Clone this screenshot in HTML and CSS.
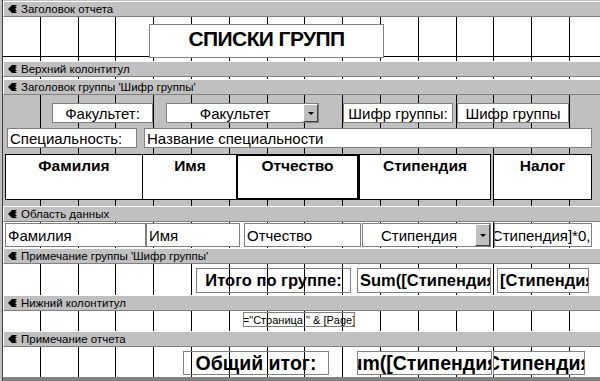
FILE: index.html
```html
<!DOCTYPE html>
<html lang="ru">
<head>
<meta charset="utf-8">
<title>Отчет — конструктор</title>
<link rel="stylesheet" href="styles.css">
</head>
<body>
<div class="design">
  <div class="bar"><svg class="ico" viewBox="0 0 9 8" width="9" height="8"><path d="M0 4 L4 0 H9 L7 2 H9 L7 4 L9 6 H7 L9 8 H4 Z"/></svg><span>Заголовок отчета</span></div>
  <div class="sec grid s-rh">
    <div class="ctl title">СПИСКИ ГРУПП</div>
  </div>

  <div class="bar"><svg class="ico" viewBox="0 0 9 8" width="9" height="8"><path d="M0 4 L4 0 H9 L7 2 H9 L7 4 L9 6 H7 L9 8 H4 Z"/></svg><span>Верхний колонтитул</span></div>
  <div class="sec grid s-ph"></div>

  <div class="bar"><svg class="ico" viewBox="0 0 9 8" width="9" height="8"><path d="M0 4 L4 0 H9 L7 2 H9 L7 4 L9 6 H7 L9 8 H4 Z"/></svg><span>Заголовок группы 'Шифр группы'</span></div>
  <div class="sec grid gray s-gh">
    <div class="ctl lbl c fac-l">Факультет:</div>
    <div class="ctl lbl combo fac-c"><span class="ctext">Факультет</span><span class="btn"><i></i></span></div>
    <div class="ctl lbl c shf-l">Шифр группы:</div>
    <div class="ctl lbl c shf-t">Шифр группы</div>
    <div class="ctl lbl spec-l">Специальность:</div>
    <div class="ctl lbl spec-t">Название специальности</div>
    <div class="ctl th th1">Фамилия</div>
    <div class="ctl th th2">Имя</div>
    <div class="ctl th th3">Отчество</div>
    <div class="ctl th th4">Стипендия</div>
    <div class="ctl th th5">Налог</div>
  </div>

  <div class="bar"><svg class="ico" viewBox="0 0 9 8" width="9" height="8"><path d="M0 4 L4 0 H9 L7 2 H9 L7 4 L9 6 H7 L9 8 H4 Z"/></svg><span>Область данных</span></div>
  <div class="sec grid s-d">
    <div class="ctl lbl dt d1">Фамилия</div>
    <div class="ctl lbl dt d2">Имя</div>
    <div class="ctl lbl dt d3">Отчество</div>
    <div class="ctl lbl combo dt d4"><span class="ctext">Стипендия</span><span class="btn"><i></i></span></div>
    <div class="ctl lbl dt c d5">=[Стипендия]*0,13</div>
  </div>

  <div class="bar"><svg class="ico" viewBox="0 0 9 8" width="9" height="8"><path d="M0 4 L4 0 H9 L7 2 H9 L7 4 L9 6 H7 L9 8 H4 Z"/></svg><span>Примечание группы 'Шифр группы'</span></div>
  <div class="sec grid s-gf">
    <div class="ctl tr b16 c gf1">Итого по группе:</div>
    <div class="ctl b16 gf2">Sum([Стипендия])</div>
    <div class="ctl b16 gf3">[Стипендия]*0,13</div>
  </div>

  <div class="bar"><svg class="ico" viewBox="0 0 9 8" width="9" height="8"><path d="M0 4 L4 0 H9 L7 2 H9 L7 4 L9 6 H7 L9 8 H4 Z"/></svg><span>Нижний колонтитул</span></div>
  <div class="sec grid s-pf">
    <div class="ctl tr c pg">="Страница " &amp; [Page]</div>
  </div>

  <div class="bar"><svg class="ico" viewBox="0 0 9 8" width="9" height="8"><path d="M0 4 L4 0 H9 L7 2 H9 L7 4 L9 6 H7 L9 8 H4 Z"/></svg><span>Примечание отчета</span></div>
  <div class="sec grid s-rf">
    <div class="ctl tr b18 c rf1">Общий итог:</div>
    <div class="ctl b18 c rf2">Sum([Стипендия])</div>
    <div class="ctl b18 c rf3">[Стипендия]</div>
  </div>
  <div class="bottom"></div>
</div>
</body>
</html>
```

FILE: styles.css
```css
html, body {
  margin: 0;
  padding: 0;
}
body {
  width: 600px;
  height: 381px;
  overflow: hidden;
  background: #c0c0c0;
  font-family: "Liberation Sans", Arial, sans-serif;
  color: #000;
}
.design {
  margin-left: 2px;
  padding-top: 1px;
  border-left: 1px solid #404040;
  display: flex;
  flex-direction: column;
}
.bar {
  box-sizing: border-box;
  height: 16px;
  background: #c0c0c0;
  border-top: 1px solid #fff;
  border-left: 1px solid #fff;
  border-bottom: 1px solid #808080;
  display: flex;
  align-items: center;
  font-size: 11.5px;
  line-height: 13px;
  white-space: nowrap;
}
.ico {
  margin-left: 4px;
  margin-right: 4px;
  fill: #000;
  flex: none;
}
.sec {
  position: relative;
  overflow: hidden;
  flex: none;
}
.grid {
  background-color: #fff;
  background-image: repeating-linear-gradient(90deg, transparent 0 36.8px, #000 36.8px 37.8px);
}
.grid.gray {
  background-color: #c0c0c0;
}
.s-rh {
  height: 44px;
  background-image:
    linear-gradient(180deg, transparent 0 39px, #000 39px 40px, transparent 40px),
    repeating-linear-gradient(90deg, transparent 0 36.8px, #000 36.8px 37.8px);
}
.s-ph { height: 2px; }
.s-gh { height: 111px; }
.s-d { height: 26px; }
.s-gf { height: 31px; }
.s-pf { height: 20px; }
.s-rf { height: 30px; }
.bottom {
  height: 6px;
  background: #808080;
}

/* controls on the design canvas */
.ctl {
  position: absolute;
  box-sizing: border-box;
  border: 1px solid #808080;
  background: #fff;
  overflow: hidden;
  white-space: nowrap;
  display: flex;
  align-items: center;
}
.c { justify-content: center; }
.tr { background: transparent; }

.title {
  left: 146px; top: 7px; width: 235px; height: 34px;
  font-size: 21px;
  font-weight: bold;
  letter-spacing: -0.6px;
  justify-content: center;
  align-items: flex-start;
  padding-top: 2px;
}
.lbl {
  font-size: 15px;
  padding-left: 2px;
}
.lbl.c { padding-left: 0; }
.fac-l { left: 49px; top: 8px; width: 101px; height: 20px; }
.fac-c { left: 163px; top: 8px; width: 153px; height: 20px; }
.shf-l { left: 340px; top: 8px; width: 110px; height: 20px; }
.shf-t { left: 454px; top: 8px; width: 112px; height: 20px; }
.spec-l { left: 4px; top: 33px; width: 130px; height: 20px; }
.spec-t { left: 141px; top: 33px; width: 448px; height: 20px; }

.combo { padding: 0; }
.combo .ctext {
  flex: 1;
  text-align: center;
  overflow: hidden;
}
.btn {
  box-sizing: border-box;
  width: 15px;
  height: 100%;
  background: #c0c0c0;
  border-top: 1px solid #fff;
  border-left: 1px solid #fff;
  border-right: 1px solid #404040;
  border-bottom: 1px solid #404040;
  display: flex;
  align-items: center;
  justify-content: center;
  flex: none;
}
.btn i {
  width: 0;
  height: 0;
  border-left: 3px solid transparent;
  border-right: 3px solid transparent;
  border-top: 3px solid #000;
}

.th {
  top: 59px;
  height: 46px;
  border: 1px solid #000;
  font-size: 15.5px;
  font-weight: bold;
  align-items: flex-start;
  justify-content: center;
  padding-top: 2px;
}
.th1 { left: 2px; width: 138px; }
.th2 { left: 139px; width: 96px; }
.th3 { left: 233px; width: 123px; border-width: 2px; padding-top: 1px; }
.th4 { left: 356px; width: 132px; }
.th5 { left: 490px; width: 99px; }

.dt { top: 1px; height: 24px; }
.d1 { left: 2px; width: 141px; }
.d2 { left: 143px; width: 94px; }
.d3 { left: 241px; width: 117px; }
.d4 { left: 359px; width: 129px; }
.d5 { left: 491px; width: 98px; }

.b16 { font-size: 16.5px; font-weight: bold; padding-left: 2px; }
.b18 { font-size: 19.5px; font-weight: bold; }
.b16.c, .b18.c { padding-left: 0; }
.gf1 { left: 193px; top: 4px; width: 155px; height: 25px; }
.gf2 { left: 354px; top: 4px; width: 134px; height: 25px; }
.gf3 { left: 494px; top: 4px; width: 92px; height: 25px; }

.pg {
  left: 240px; top: 1px; width: 112px; height: 15px;
  font-size: 11px;
}

.rf1 { left: 180px; top: 4px; width: 146px; height: 24px; }
.rf2 { left: 354px; top: 4px; width: 135px; height: 24px; }
.rf3 { left: 490px; top: 4px; width: 92px; height: 24px; }
```
